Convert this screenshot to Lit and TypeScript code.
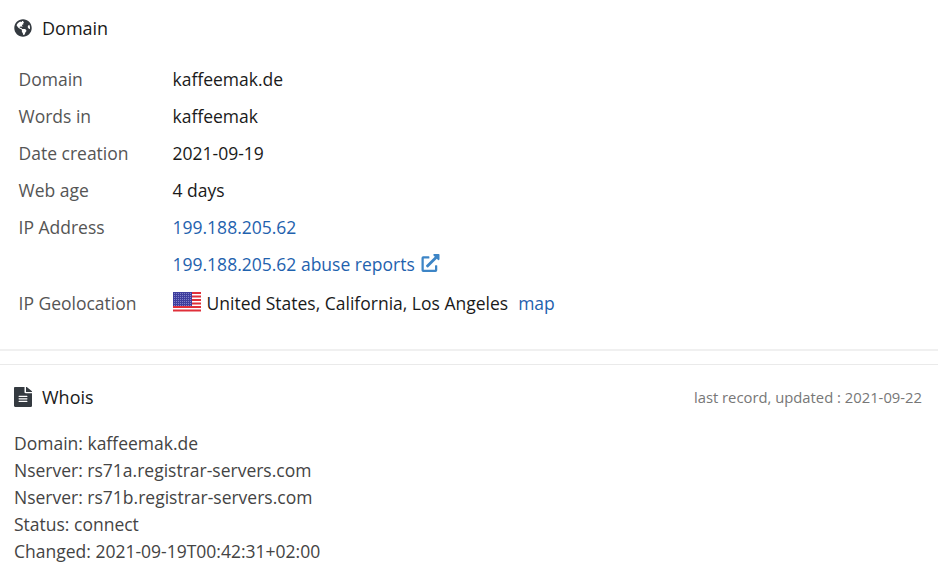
import { LitElement, html, css, svg } from "lit";
import { customElement } from "lit/decorators.js";

const GLOBE = "M248 8C111.03 8 0 119.03 0 256s111.03 248 248 248 248-111.03 248-248S384.97 8 248 8zm82.29 357.6c-3.9 3.88-7.99 7.95-11.31 11.28-2.99 3-5.1 6.7-6.17 10.71-1.51 5.66-2.73 11.38-4.77 16.87l-17.39 46.85c-13.76 3-28 4.69-42.65 4.69v-27.38c1.69-12.62-7.64-36.26-22.63-51.25-6-6-9.37-14.14-9.37-22.63v-32.01c0-11.64-6.27-22.34-16.46-27.97-14.37-7.95-34.81-19.06-48.81-26.11-11.48-5.78-22.1-13.14-31.65-21.75l-.8-.72a114.792 114.792 0 0 1-18.06-20.74c-9.38-13.77-24.66-36.42-34.59-51.14 20.47-45.5 57.36-82.04 103.2-101.89l24.01 12.01C203.48 89.74 216 82.01 216 70.11v-11.3c7.99-1.29 16.12-2.11 24.45-2.42l28.3 28.3c6.25 6.25 6.25 16.38 0 22.63L264 112l-10.34 10.34c-3.12 3.12-3.12 8.19 0 11.31l4.69 4.69c3.12 3.12 3.12 8.19 0 11.31l-8 8a8.008 8.008 0 0 1-5.66 2.34h-8.99c-2.08 0-4.08.81-5.58 2.27l-9.92 9.65a8.008 8.008 0 0 0-1.58 9.31l15.59 31.19c2.66 5.32-1.21 11.58-7.15 11.58h-5.64c-1.93 0-3.79-.7-5.24-1.96l-9.28-8.06a16.017 16.017 0 0 0-15.55-3.1l-31.17 10.39a11.95 11.95 0 0 0-8.17 11.34c0 4.53 2.56 8.66 6.61 10.69l11.08 5.54c9.41 4.71 19.79 7.16 30.31 7.16s22.59 27.29 32 32h66.75c8.49 0 16.62 3.37 22.63 9.37l13.69 13.69a30.503 30.503 0 0 1 8.93 21.57 46.536 46.536 0 0 1-13.72 32.98zM417 274.25c-5.79-1.45-10.84-5-14.15-9.97l-17.98-26.97a23.97 23.97 0 0 1 0-26.62l19.59-29.38c2.32-3.47 5.5-6.29 9.24-8.15l12.98-6.49C440.2 193.59 448 223.87 448 256c0 8.67-.74 17.16-1.82 25.54L417 274.25z";
const EXT = "M432 320h-32a16 16 0 0 0-16 16v112H64V128h144a16 16 0 0 0 16-16V80a16 16 0 0 0-16-16H48a48 48 0 0 0-48 48v352a48 48 0 0 0 48 48h352a48 48 0 0 0 48-48V336a16 16 0 0 0-16-16zM488 0H360c-21.37 0-32.05 25.91-17 41l35.73 35.73L135 320.37a24 24 0 0 0 0 34L157.67 377a24 24 0 0 0 34 0l243.61-243.68L471 169c15 15 41 4.5 41-17V24a24 24 0 0 0-24-24z";

const stars = [];
for (let y = 1.5; y < 14; y += 2) {
  for (let x = 1.5; x < 19; x += 2) {
    stars.push(svg`<circle cx=${x} cy=${y} r="0.55" fill="#8f8fd0"/>`);
  }
}

@customElement("app-root")
export class AppRoot extends LitElement {
  static styles = css`
    :host { display: block; width: 938px; height: 577px; overflow: hidden; background: #fff; font-family: "Open Sans", sans-serif; font-size: 17.5px; color: #212529; }
    .head { display: flex; align-items: center; gap: 10px; font-size: 18px; font-weight: 500; color: #1a1a1a; }
    .icon { flex: none; width: 18px; height: 18px; fill: #343a40; }
    .file { width: 18px; height: 20px; }
    .domain-head { padding: 15px 14px 0; height: 25px; }
    .rows { margin: 20px 0 0 18.5px; display: grid; grid-template-columns: 154px 1fr; grid-template-rows: repeat(6, 37px) 42px; align-items: center; }
    .k { color: #555; }
    .v { color: #1a1a1a; }
    a { color: #1f62ae; text-decoration: none; }
    .geo { display: flex; align-items: center; height: 39px; margin-bottom: 1px; }
    .flag { width: 28px; height: 21px; margin-right: 6px; flex: none; }
    .map { margin-left: 10px; }
    .ext { width: 19px; height: 18px; margin-left: 6px; vertical-align: -1px; fill: #3d85c6; }
    .rule { height: 13px; margin-top: 25px; border-top: 2px solid #f0f0f0; border-bottom: 1px solid #eaeaea; }
    .whois-head { display: flex; justify-content: space-between; align-items: center; padding: 20px 16px 0 14px; }
    .updated { font-size: 14.8px; font-weight: 400; color: #777; }
    .whois { margin: 21px 0 0 14px; line-height: 27px; color: #444; }
  `;
  render() {
    return html`
      <div class="head domain-head">
        <svg class="icon" viewBox="0 0 496 512"><path d=${GLOBE}/></svg>
        <span>Domain</span>
      </div>
      <div class="rows">
        <div class="k">Domain</div><div class="v">kaffeemak.de</div>
        <div class="k">Words in</div><div class="v">kaffeemak</div>
        <div class="k">Date creation</div><div class="v">2021-09-19</div>
        <div class="k">Web age</div><div class="v">4 days</div>
        <div class="k">IP Address</div><div><a href="#">199.188.205.62</a></div>
        <div class="k"></div><div><a href="#">199.188.205.62 abuse reports<svg class="ext" viewBox="0 0 512 512"><path d=${EXT}/></svg></a></div>
        <div class="k geo">IP Geolocation</div>
        <div class="geo">
          <svg class="flag" viewBox="0 0 28 21"><rect width="28" height="21" fill="#fff"/><g fill="#e0303a"><rect width="28" height="2"/><rect y="3.5" width="28" height="2"/><rect y="7" width="28" height="2"/><rect y="10.5" width="28" height="2"/><rect y="14" width="28" height="2"/><rect y="17.5" width="28" height="2"/></g><rect width="19" height="14" fill="#3f3f9e"/>${stars}</svg>
          <span class="v">United States, California, Los Angeles</span><a class="map" href="#">map</a>
        </div>
      </div>
      <div class="rule"></div>
      <div class="head whois-head">
        <span class="head"><svg class="icon file" viewBox="0 0 384 512" preserveAspectRatio="none"><path d="M224 136V0H24C11 0 0 11 0 24v464c0 13 11 24 24 24h336c13 0 24-11 24-24V160H248c-13 0-24-11-24-24zm64 236c0 7-5 12-12 12H108c-7 0-12-5-12-12v-8c0-7 5-12 12-12h168c7 0 12 5 12 12zm0-64c0 7-5 12-12 12H108c-7 0-12-5-12-12v-8c0-7 5-12 12-12h168c7 0 12 5 12 12zm0-72v8c0 7-5 12-12 12H108c-7 0-12-5-12-12v-8c0-7 5-12 12-12h168c7 0 12 5 12 12zm96-114v6H256V0h6c6 0 12 3 17 7l98 98c4 5 7 11 7 17z"/></svg><span>Whois</span></span>
        <span class="updated">last record, updated : 2021-09-22</span>
      </div>
      <div class="whois">
        <div>Domain: kaffeemak.de</div>
        <div>Nserver: rs71a.registrar-servers.com</div>
        <div>Nserver: rs71b.registrar-servers.com</div>
        <div>Status: connect</div>
        <div>Changed: 2021-09-19T00:42:31+02:00</div>
      </div>
    `;
  }
}
